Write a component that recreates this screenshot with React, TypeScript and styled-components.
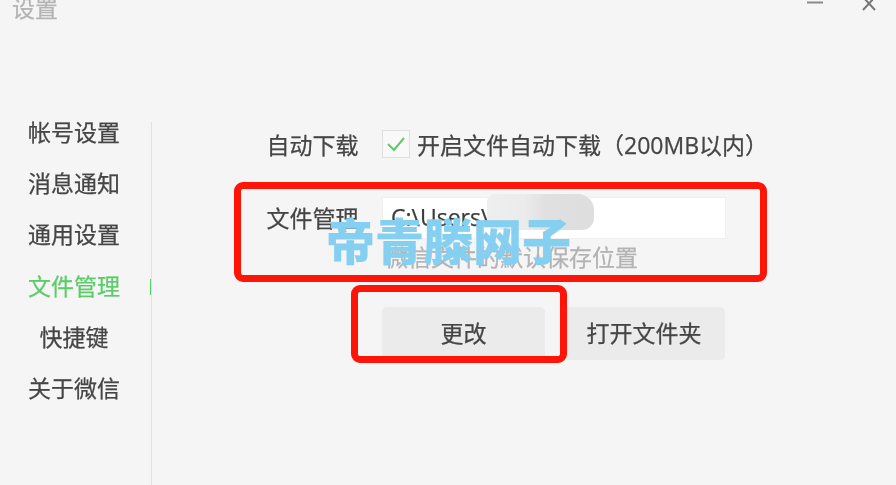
import { createGlobalStyle } from "styled-components";
import styled from "styled-components";

const Global = createGlobalStyle`
  html, body {
    margin: 0;
    padding: 0;
    background: #f5f5f5;
  }
`;

const Window = styled.div`
  position: relative;
  width: 896px;
  height: 485px;
  overflow: hidden;
  background: #f5f5f5;
  color: #454545;
  font-family: "Open Sans", "Noto Sans CJK SC", sans-serif;
  font-size: 23px;
  -webkit-text-stroke: 0.25px currentColor;
  filter: blur(0.5px);
`;

const TitleBar = styled.div`
  display: flex;
  align-items: flex-end;
  justify-content: space-between;
  height: 21px;
  padding: 0 18px 0 12px;
  overflow: hidden;
`;

const Title = styled.div`
  color: #b4b4b4;
  line-height: 26px;
`;

const WindowControls = styled.div`
  display: flex;
  align-self: flex-start;
  gap: 38px;
`;

const Body = styled.div`
  display: flex;
  margin-top: 86px;
`;

const Sidebar = styled.nav`
  position: relative;
  flex: none;
  width: 148px;
  height: 378px;
  &::after {
    content: "";
    position: absolute;
    top: 15px;
    bottom: 0;
    right: -4px;
    width: 1px;
    background: #e2e2e2;
  }
`;

const NavItem = styled.div<{ $active?: boolean }>`
  position: relative;
  height: 51.2px;
  line-height: 51px;
  text-align: center;
  color: ${(p) => (p.$active ? "#5ccb6a" : "#454545")};
  ${(p) =>
    p.$active &&
    `&::after {
      content: "";
      position: absolute;
      top: 18px;
      right: -4px;
      width: 2px;
      height: 16px;
      background: #5ccb6a;
    }`}
`;

const Main = styled.main`
  display: flex;
  flex-direction: column;
  padding: 23px 0 0 119px;
`;

const Row = styled.div`
  display: flex;
  align-items: center;
  height: 28px;
  white-space: nowrap;
`;

const FieldLabel = styled.div`
  flex: none;
  width: 115.5px;
  margin-left: -0.5px;
`;

const CheckBox = styled.div`
  flex: none;
  display: flex;
  align-items: center;
  justify-content: center;
  width: 26px;
  height: 26px;
  margin-right: 7px;
  background: #f9f9f9;
  border: 1px solid #e0e0e0;
`;

const PathRow = styled.div`
  display: flex;
  align-items: center;
  margin-top: 39px;
  ${FieldLabel} {
    margin-bottom: 3px;
  }
`;

const PathInput = styled.div`
  position: relative;
  box-sizing: border-box;
  width: 344px;
  height: 42px;
  padding-left: 8px;
  line-height: 38px;
  background: #fff;
  border: 1px solid #f0f0f0;
  color: #3c3c3c;
`;

const Smudge = styled.div`
  position: absolute;
  top: -4px;
  left: 104px;
  width: 107px;
  height: 36px;
  border-radius: 8px 16px 12px 8px;
  background: linear-gradient(90deg, #efefef 0%, #ebebeb 35%, #e0e0e0 55%, #dedede 100%);
  filter: blur(0.5px);
`;

const Hint = styled.div`
  margin: 5px 0 0 118px;
  line-height: 26px;
  color: #b3b3b3;
`;

const Buttons = styled.div`
  display: flex;
  gap: 18px;
  margin: 37px 0 0 115px;
`;

const Button = styled.div<{ $width: number }>`
  width: ${(p) => p.$width}px;
  height: 53px;
  line-height: 53px;
  border-radius: 5px;
  text-align: center;
  background: #ebebeb;
`;

const RedBox = styled.div<{ $x: number; $y: number; $w: number; $h: number }>`
  position: absolute;
  box-sizing: border-box;
  left: ${(p) => p.$x}px;
  top: ${(p) => p.$y}px;
  width: ${(p) => p.$w}px;
  height: ${(p) => p.$h}px;
  border: 7px solid #ff1408;
  border-radius: 9px;
`;

const Watermark = styled.div`
  position: absolute;
  left: 326px;
  top: 208px;
  font-family: "Noto Sans CJK SC", sans-serif;
  font-size: 49px;
  font-weight: 900;
  line-height: 62px;
  color: #85cff0;
  white-space: nowrap;
`;

const navItems = ["帐号设置", "消息通知", "通用设置", "文件管理", "快捷键", "关于微信"];

export default function App() {
  return (
    <Window>
      <Global />
      <TitleBar>
        <Title>设置</Title>
        <WindowControls>
          <svg width="18" height="6" viewBox="0 0 18 6">
            <path d="M1 2.5H17" stroke="#8a8a8a" strokeWidth="2" />
          </svg>
          <svg width="16" height="11" viewBox="0 0 16 11">
            <path d="M1 -3L13 10M13 -3L1 10" stroke="#777" strokeWidth="2" fill="none" />
          </svg>
        </WindowControls>
      </TitleBar>
      <Body>
        <Sidebar>
          {navItems.map((item) => (
            <NavItem key={item} $active={item === "文件管理"}>
              {item}
            </NavItem>
          ))}
        </Sidebar>
        <Main>
          <Row>
            <FieldLabel>自动下载</FieldLabel>
            <CheckBox>
              <svg width="20" height="16" viewBox="0 0 20 16">
                <path d="M2 8L8 14L18 2" stroke="#5ccb6a" strokeWidth="2" fill="none" />
              </svg>
            </CheckBox>
            开启文件自动下载（200MB以内）
          </Row>
          <PathRow>
            <FieldLabel>文件管理</FieldLabel>
            <PathInput>
              C:\Users\
              <Smudge />
            </PathInput>
          </PathRow>
          <Hint>微信文件的默认保存位置</Hint>
          <Buttons>
            <Button $width={163}>更改</Button>
            <Button $width={162}>打开文件夹</Button>
          </Buttons>
        </Main>
      </Body>
      <RedBox $x={234} $y={182} $w={533} $h={100} />
      <RedBox $x={351} $y={285} $w={216} $h={78} />
      <Watermark>帝青滕网子</Watermark>
    </Window>
  );
}
